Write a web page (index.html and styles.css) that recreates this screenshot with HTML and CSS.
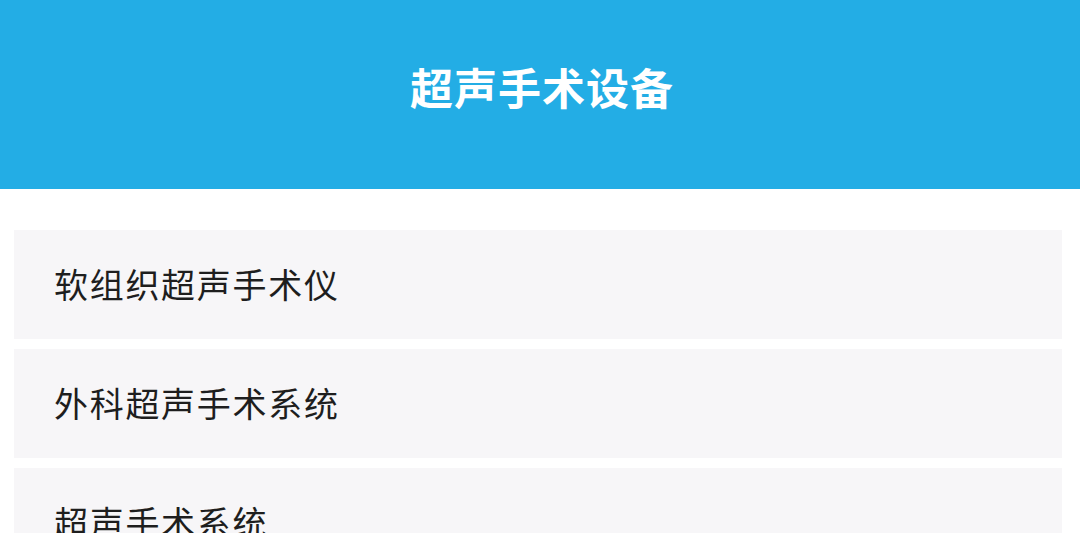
FILE: index.html
```html
<!DOCTYPE html>
<html lang="zh">
<head>
<meta charset="utf-8">
<link rel="stylesheet" href="styles.css">
</head>
<body>
<header class="header"><h1 class="title">超声手术设备</h1></header>
<main class="list">
  <div class="card">软组织超声手术仪</div>
  <div class="card">外科超声手术系统</div>
  <div class="card">超声手术系统</div>
</main>
</body>
</html>
```
FILE: styles.css
```css
html, body { margin: 0; padding: 0; }
body {
  background: #ffffff;
  font-family: "Noto Sans CJK SC", "Noto Sans", sans-serif;
  width: 1080px;
  height: 533px;
  overflow: hidden;
}
.header {
  background: #23ade5;
  height: 189px;
  display: flex;
  justify-content: center;
  padding-top: 55px;
  box-sizing: border-box;
}
.title {
  margin: 0 0 0 4px;
  color: #ffffff;
  font-size: 43px;
  font-weight: 700;
  line-height: 62px;
  letter-spacing: 1px;
}
.list {
  padding: 41px 18px 0 14px;
  display: flex;
  flex-direction: column;
  gap: 10px;
}
.card {
  background: #f7f6f8;
  height: 109px;
  display: flex;
  align-items: center;
  padding-left: 40px;
  padding-bottom: 2px;
  box-sizing: border-box;
  font-size: 34px;
  color: #1e1e1e;
  letter-spacing: 1.7px;
}
```
